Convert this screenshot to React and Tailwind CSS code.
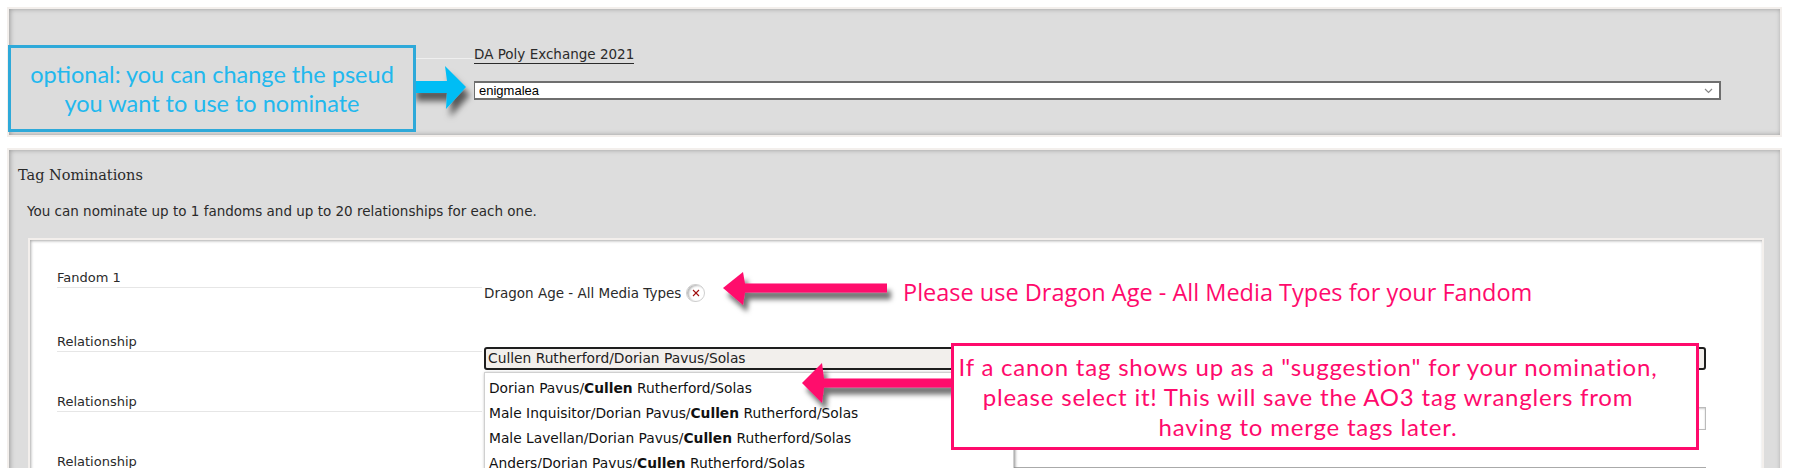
import React from "react";

function XBtn() {
  return (
    <span className="ml-[5px] inline-flex h-[18px] w-[19px] items-center justify-center rounded-full border border-[#cfcfcf] bg-white shadow-[inset_2px_1px_2px_#bbb]">
      <svg width="8" height="8" viewBox="0 0 8 8">
        <line x1="1" y1="1" x2="7" y2="7" stroke="#a01010" strokeWidth="1.1" />
        <line x1="7" y1="1" x2="1" y2="7" stroke="#a01010" strokeWidth="1.1" />
      </svg>
    </span>
  );
}

function Item({ pre, post }) {
  return (
    <li className="h-[25px] pl-[4px] leading-[25px] text-[13.8px] text-[#111]">
      {pre}
      <b className="font-bold">Cullen</b>
      {post}
    </li>
  );
}

export default function App() {
  return (
    <div className="relative h-[468px] w-[1795px] overflow-hidden bg-white pl-[7px] pr-[13px] pt-[7px] font-['DejaVu_Sans',sans-serif] text-[#2a2a2a]">
      {/* top fieldset */}
      <div className="h-[130px] border-2 border-[#f3efec] bg-[#dddddd] shadow-[inset_1px_0_5px_#999]">
        <div className="flex pl-[48px] pr-[59px] pt-[37px]">
          <div className="h-[13px] w-[417px] shrink-0 border-b border-[#efefef]" />
          <div className="flex-1">
            <div className="flex">
              <span className="border-b border-[#2a2a2a] text-[13.5px] leading-[17px]">
                DA Poly Exchange 2021
              </span>
            </div>
            <div className="mt-[17px] flex h-[19px] items-center justify-between border border-b-2 border-r-2 border-t-2 border-[#6e6e6e] bg-white pl-[4px] pr-[6px] font-['Liberation_Sans',Arial,sans-serif] text-[13px] text-black">
              <span>enigmalea</span>
              <svg width="9" height="6" viewBox="0 0 9 6">
                <polyline points="1,1 4.5,4.5 8,1" fill="none" stroke="#888" strokeWidth="1.2" />
              </svg>
            </div>
          </div>
        </div>
      </div>

      {/* tag nominations fieldset */}
      <div className="mt-[11px] h-[340px] border-2 border-[#f3efec] bg-[#dddddd] pt-[15px] shadow-[inset_1px_0_5px_#999]">
        <h3 className="pl-[9px] font-['DejaVu_Serif',Georgia,serif] text-[14.5px] leading-[20px] text-[#2a2a2a]">
          Tag Nominations
        </h3>
        <p className="mt-[17px] pl-[18px] text-[13.5px] leading-[18px]">
          You can nominate up to 1 fandoms and up to 20 relationships for each one.
        </p>
        <div className="ml-[19px] mr-[16px] mt-[18px] h-[260px] border-2 border-[#f3efec] bg-white pl-[27px] pr-[56px] pt-[29px] shadow-[inset_1px_1px_3px_#aaa]">
          {/* Fandom row */}
          <div className="flex h-[64px]">
            <div className="h-[19px] w-[425px] shrink-0 border-b border-[#e6e6e6] text-[13px] leading-[18px]">
              Fandom 1
            </div>
            <div className="ml-[2px] mt-[15px] flex h-[18px] items-center text-[13.5px] leading-[18px]">
              Dragon Age - All Media Types
              <XBtn />
            </div>
          </div>

          {/* Relationship 1 */}
          <div className="flex h-[60px]">
            <div className="h-[19px] w-[425px] shrink-0 border-b border-[#e6e6e6] text-[13px] leading-[18px]">
              Relationship
            </div>
            <div className="relative ml-[2px] mt-[14px] flex-1">
              <div className="h-[23px] rounded-[3px] border-2 border-[#1e1e1e] bg-[#f2efec] pl-[2px] text-[13.8px] leading-[19px] text-[#222]">
                Cullen Rutherford/Dorian Pavus/Solas
              </div>
              <ul className="absolute left-0 top-[25px] h-[120px] w-[530px] border border-[#d0d0d0] bg-white pt-[3px] shadow-[1px_1px_3px_#888]">
                <Item pre="Dorian Pavus/" post=" Rutherford/Solas" />
                <Item pre="Male Inquisitor/Dorian Pavus/" post=" Rutherford/Solas" />
                <Item pre="Male Lavellan/Dorian Pavus/" post=" Rutherford/Solas" />
                <Item pre="Anders/Dorian Pavus/" post=" Rutherford/Solas" />
              </ul>
            </div>
          </div>

          {/* Relationship 2 */}
          <div className="flex h-[60px]">
            <div className="h-[19px] w-[425px] shrink-0 border-b border-[#e6e6e6] text-[13px] leading-[18px]">
              Relationship
            </div>
            <div className="ml-[2px] mt-[14px] flex-1">
              <div className="h-[23px] border border-[#bbbbbb] bg-white shadow-[inset_0_1px_2px_#ccc]" />
            </div>
          </div>

          {/* Relationship 3 */}
          <div className="flex h-[60px]">
            <div className="h-[19px] w-[425px] shrink-0 border-b border-[#e6e6e6] text-[13px] leading-[18px]">
              Relationship
            </div>
            <div className="ml-[2px] mt-[14px] flex-1">
              <div className="h-[23px] border border-[#aaaaaa] bg-white shadow-[inset_0_1px_2px_#ccc]" />
            </div>
          </div>
        </div>
      </div>

      {/* ---- annotations ---- */}
      {/* blue arrow */}
      <svg className="absolute left-[410px] top-[55px] z-20" width="75" height="75" viewBox="0 0 75 75">
        <defs>
          <filter id="sb" x="-30%" y="-30%" width="160%" height="170%">
            <feDropShadow dx="4" dy="8" stdDeviation="3" floodColor="#000" floodOpacity="0.6" />
          </filter>
        </defs>
        <polygon
          points="56,32 35,11 37,26 2,26 2,38 37,38 36,54"
          fill="#00bdf5"
          filter="url(#sb)"
        />
      </svg>

      {/* blue box */}
      <div className="absolute left-[8px] top-[45px] z-20 flex h-[87px] w-[408px] flex-col items-center justify-center border-[3px] border-[#2ea9d9] bg-[#dcdcdc] font-['Lato',sans-serif] text-[23.5px] font-normal leading-[29px] text-[#22b8ee]">
        <span>optional: you can change the pseud</span>
        <span>you want to use to nominate</span>
      </div>

      {/* pink arrow 1 */}
      <svg className="absolute left-[715px] top-[262px] z-20" width="190" height="65" viewBox="0 0 190 65">
        <defs>
          <filter id="sp1" x="-20%" y="-30%" width="140%" height="180%">
            <feDropShadow dx="4" dy="7" stdDeviation="2.5" floodColor="#000" floodOpacity="0.55" />
          </filter>
        </defs>
        <polygon
          points="8,26 28,10 30,21.5 172,21.5 172,30.5 30,30.5 28,43"
          fill="#ff0a6c"
          filter="url(#sp1)"
        />
      </svg>

      {/* pink text */}
      <div className="absolute left-[903px] top-[278px] z-20 font-['Open_Sans',sans-serif] text-[23.5px] leading-[28px] text-[#ff0a6c]">
        Please use Dragon Age - All Media Types for your Fandom
      </div>

      {/* pink arrow 2 */}
      <svg className="absolute left-[794px] top-[353px] z-20" width="170" height="80" viewBox="0 0 170 80">
        <defs>
          <filter id="sp2" x="-20%" y="-30%" width="140%" height="170%">
            <feDropShadow dx="4" dy="7" stdDeviation="2.5" floodColor="#000" floodOpacity="0.55" />
          </filter>
        </defs>
        <polygon
          points="8,30 28,10 30,25.5 162,25.5 162,34.5 30,34.5 28,50"
          fill="#ff0a6c"
          filter="url(#sp2)"
        />
      </svg>

      {/* pink box */}
      <div className="absolute left-[951px] top-[343px] z-20 flex h-[107px] w-[748px] flex-col items-center justify-center border-[3px] border-[#ff0a6c] bg-white pr-[34px] font-['Lato',sans-serif] text-[24px] font-normal leading-[30px] tracking-[0.8px] text-[#ff0a6c]">
        <span>If a canon tag shows up as a "suggestion" for your nomination,</span>
        <span>please select it! This will save the AO3 tag wranglers from</span>
        <span>having to merge tags later.</span>
      </div>
    </div>
  );
}
